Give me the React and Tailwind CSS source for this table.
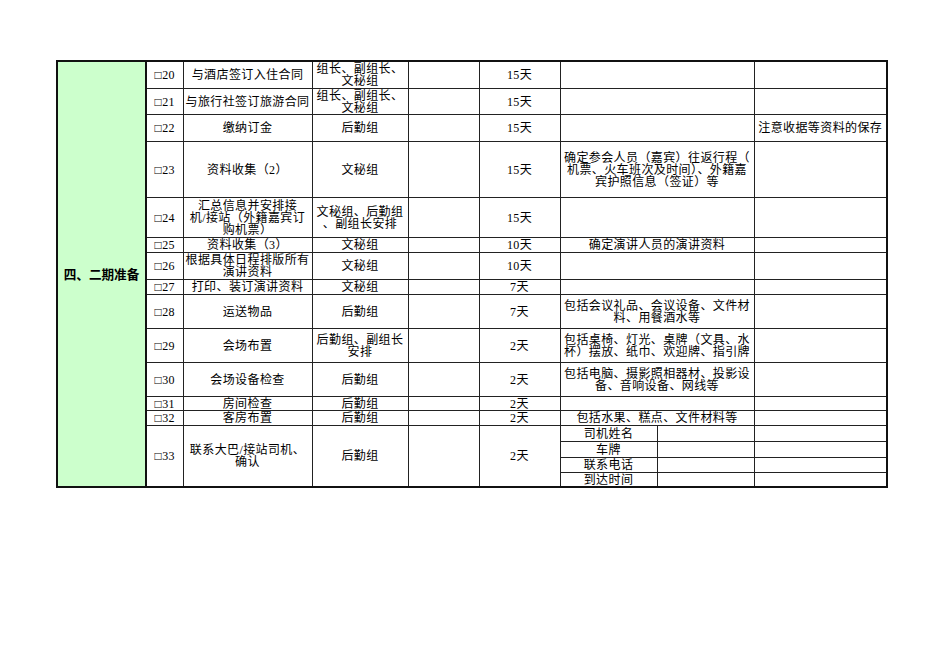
import React from "react";

const rows = [
  { n: "20", task: ["与酒店签订入住合同"], who: ["组长、副组长、", "文秘组"], days: "15天", h: 27 },
  { n: "21", task: ["与旅行社签订旅游合同"], who: ["组长、副组长、", "文秘组"], days: "15天", h: 26 },
  { n: "22", task: ["缴纳订金"], who: ["后勤组"], days: "15天", remark: "注意收据等资料的保存", h: 27 },
  {
    n: "23",
    task: ["资料收集（2）"],
    who: ["文秘组"],
    days: "15天",
    note: ["确定参会人员（嘉宾）往返行程（", "机票、火车班次及时间）、外籍嘉", "宾护照信息（签证）等"],
    h: 56,
  },
  {
    n: "24",
    task: ["汇总信息并安排接", "机/接站（外籍嘉宾订", "购机票）"],
    who: ["文秘组、后勤组", "、副组长安排"],
    days: "15天",
    h: 40,
  },
  { n: "25", task: ["资料收集（3）"], who: ["文秘组"], days: "10天", note: ["确定演讲人员的演讲资料"], h: 15 },
  { n: "26", task: ["根据具体日程排版所有", "演讲资料"], who: ["文秘组"], days: "10天", h: 27 },
  { n: "27", task: ["打印、装订演讲资料"], who: ["文秘组"], days: "7天", h: 15 },
  {
    n: "28",
    task: ["运送物品"],
    who: ["后勤组"],
    days: "7天",
    note: ["包括会议礼品、会议设备、文件材", "料、用餐酒水等"],
    h: 34,
  },
  {
    n: "29",
    task: ["会场布置"],
    who: ["后勤组、副组长", "安排"],
    days: "2天",
    note: ["包括桌椅、灯光、桌牌（文具、水", "杯）摆放、纸巾、欢迎牌、指引牌"],
    h: 34,
  },
  {
    n: "30",
    task: ["会场设备检查"],
    who: ["后勤组"],
    days: "2天",
    note: ["包括电脑、摄影照相器材、投影设", "备、音响设备、网线等"],
    h: 34,
  },
  { n: "31", task: ["房间检查"], who: ["后勤组"], days: "2天", h: 14 },
  { n: "32", task: ["客房布置"], who: ["后勤组"], days: "2天", note: ["包括水果、糕点、文件材料等"], h: 15 },
];

const driver = [
  { label: "司机姓名", h: 16 },
  { label: "车牌", h: 16 },
  { label: "联系电话", h: 15 },
  { label: "到达时间", h: 15 },
];

// every grid cell: thin dark rule, centred text
const cell = "border border-[#222] px-0 pt-[1px] pb-0 text-center align-middle whitespace-nowrap";

function Lines({ items }) {
  if (!items) return null;
  return items.map((t, i) => (
    <div key={i} className="leading-[12px]">
      {t}
    </div>
  ));
}

export default function App() {
  return (
    <div className="min-h-[672px] bg-white pl-[56px] pt-[60px] text-black">
      <table
        className="table-fixed border-collapse border-2 border-[#111] text-[12px] leading-[12px] tracking-[0.4px]"
        style={{ fontFamily: '"Liberation Serif", "Noto Sans CJK SC", serif' }}
      >
        <colgroup>
          <col className="w-[89px]" />
          <col className="w-[37px]" />
          <col className="w-[129px]" />
          <col className="w-[96px]" />
          <col className="w-[71px]" />
          <col className="w-[81px]" />
          <col className="w-[97px]" />
          <col className="w-[97px]" />
          <col className="w-[133px]" />
        </colgroup>
        <tbody>
          {rows.map((r, i) => (
            <tr key={r.n} style={{ height: r.h }}>
              {i === 0 && (
                <td
                  rowSpan={rows.length + driver.length}
                  className="border-2 border-[#111] bg-[#ccffcc] p-0 text-center align-middle text-[12.6px] font-bold tracking-normal"
                  style={{ fontFamily: '"Noto Sans CJK SC", sans-serif' }}
                >
                  四、二期准备
                </td>
              )}
              <td className={cell}>□{r.n}</td>
              <td className={cell}>
                <Lines items={r.task} />
              </td>
              <td className={cell}>
                <Lines items={r.who} />
              </td>
              <td className={cell}></td>
              <td className={cell}>{r.days}</td>
              <td className={cell} colSpan={2}>
                <Lines items={r.note} />
              </td>
              <td className={cell}>{r.remark}</td>
            </tr>
          ))}
          {driver.map((d, i) => (
            <tr key={d.label} style={{ height: d.h }}>
              {i === 0 && (
                <>
                  <td rowSpan={4} className={cell}>□33</td>
                  <td rowSpan={4} className={cell}>
                    <Lines items={["联系大巴/接站司机、", "确认"]} />
                  </td>
                  <td rowSpan={4} className={cell}>后勤组</td>
                  <td rowSpan={4} className={cell}></td>
                  <td rowSpan={4} className={cell}>2天</td>
                </>
              )}
              <td className={cell}>{d.label}</td>
              <td className={cell}></td>
              <td className={cell}></td>
            </tr>
          ))}
        </tbody>
      </table>
    </div>
  );
}
